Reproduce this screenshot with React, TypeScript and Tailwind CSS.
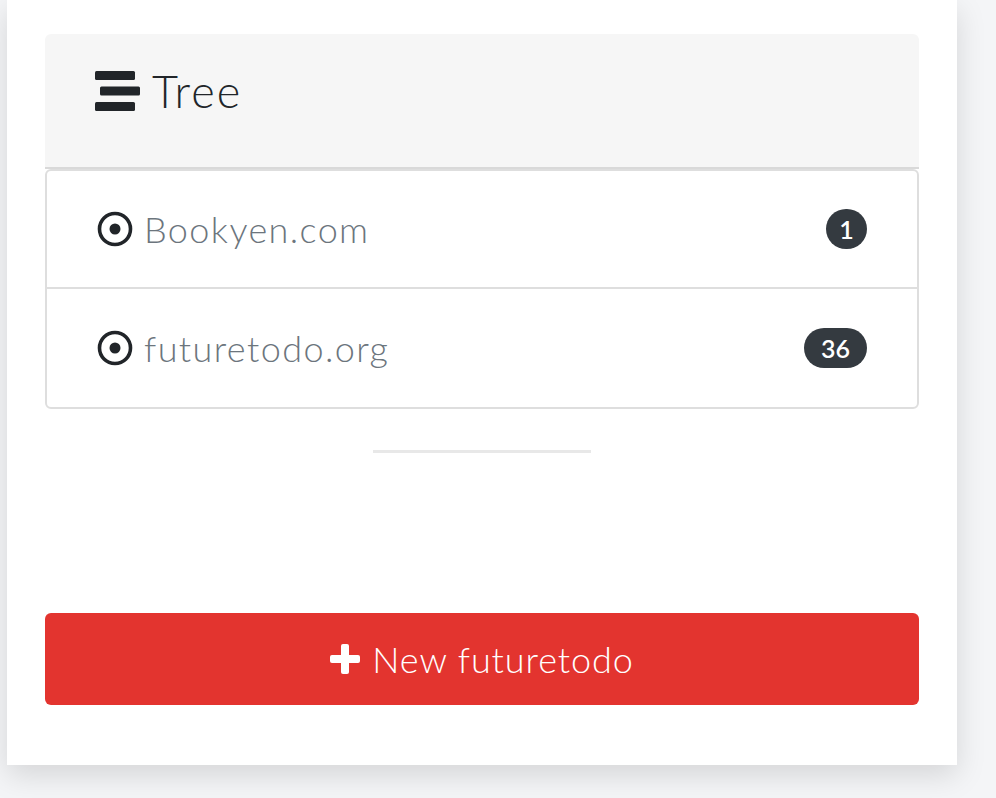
import React from 'react';

const font = { fontFamily: 'Lato, "Open Sans", "Liberation Sans", sans-serif' };

const StreamIcon = () => (
  <svg width="45" height="40" viewBox="0 0 45 40" className="text-[#212529]">
    <rect x="0" y="0" width="40" height="9" rx="1.5" fill="currentColor" />
    <rect x="5" y="15.5" width="40" height="9" rx="1.5" fill="currentColor" />
    <rect x="0" y="31" width="40" height="9" rx="1.5" fill="currentColor" />
  </svg>
);

const DotCircle = () => (
  <svg width="36" height="36" viewBox="0 0 36 36" className="text-[#212529] shrink-0">
    <circle cx="18" cy="18" r="15.5" fill="none" stroke="currentColor" strokeWidth="3.6" />
    <circle cx="18" cy="18" r="5.5" fill="currentColor" />
  </svg>
);

const items = [
  { name: 'Bookyen.com', count: 1 },
  { name: 'futuretodo.org', count: 36 },
];

export default function App() {
  return (
    <div className="min-h-screen bg-[#f4f5f7]" style={font}>
      <div className="w-[950px] ml-[7px] bg-white shadow-[0_10px_28px_rgba(0,0,0,0.13)] px-[38px] pt-[34px] pb-[60px]">
        <div className="h-[135px] bg-[#f6f6f6] rounded-t-md border-b-2 border-[#d9d9d9] flex items-center pl-[50px] pb-[19px] gap-[12px]">
          <StreamIcon />
          <span className="text-[45px] font-light tracking-[2px] text-[#212529] leading-none">Tree</span>
        </div>

        <div className="border-2 border-[#dedede] rounded-md">
          {items.map((item, i) => (
            <div
              key={item.name}
              className={`h-[118px] flex items-center pl-[50px] pr-[50px] ${i === 0 ? 'border-b-2 border-[#dedede]' : ''}`}
            >
              <DotCircle />
              <span className="ml-[11px] text-[36px] font-light tracking-[1.4px] text-[#6c757d] leading-none">{item.name}</span>
              <span
                className={`ml-auto h-[40px] rounded-full bg-[#343a40] text-white text-[25px] font-semibold flex items-center justify-center leading-none ${
                  item.count < 10 ? 'w-[41px]' : 'px-[17px]'
                }`}
              >
                {item.count}
              </span>
            </div>
          ))}
        </div>

        <div className="mt-[41px] mx-auto w-[218px] h-[3px] bg-[#e8e8e8]" />

        <button className="mt-[160px] w-full h-[92px] rounded-md bg-[#e3342f] text-white flex items-center justify-center gap-[12px]">
          <svg width="30" height="30" viewBox="0 0 30 30">
            <rect x="11" y="0" width="8" height="30" rx="2" fill="currentColor" />
            <rect x="0" y="11" width="30" height="8" rx="2" fill="currentColor" />
          </svg>
          <span className="text-[36px] font-light tracking-[0.9px] leading-none">New futuretodo</span>
        </button>
      </div>
    </div>
  );
}
